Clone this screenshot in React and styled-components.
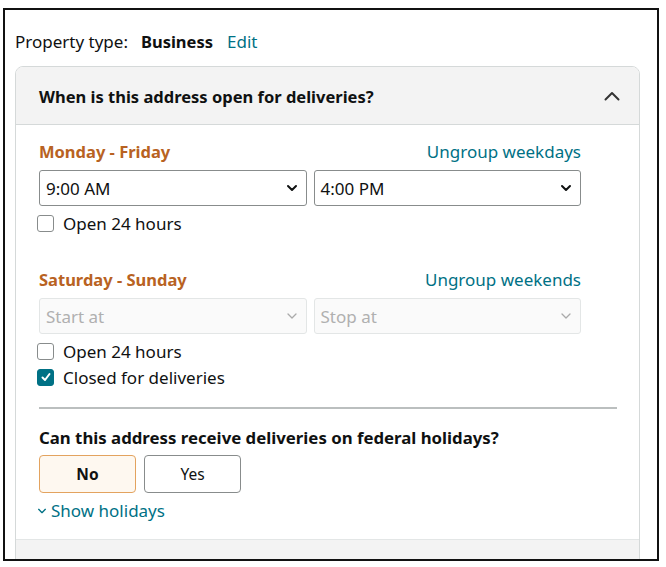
import React from "react";
import styled, { createGlobalStyle } from "styled-components";

const GlobalStyle = createGlobalStyle`
  html, body {
    margin: 0;
    padding: 0;
    background: #fff;
  }
  body {
    font-family: "Noto Sans", "Open Sans", Arial, sans-serif;
    color: #0f1111;
  }
`;

const ChevronDown = ({ size = 12, color = "#0f1111", weight = 2 }) => (
  <svg width={size} height={size} viewBox="0 0 12 12">
    <path d="M2 4 L6 8 L10 4" fill="none" stroke={color} strokeWidth={weight} strokeLinecap="round" strokeLinejoin="round" />
  </svg>
);

const ChevronUp = () => (
  <svg width="18" height="12" viewBox="0 0 18 12">
    <path d="M2.5 9.5 L9 3 L15.5 9.5" fill="none" stroke="#333" strokeWidth="2" strokeLinecap="round" strokeLinejoin="round" />
  </svg>
);

const Check = () => (
  <svg width="12" height="12" viewBox="0 0 12 12">
    <path d="M2.5 6.5 L5 9 L9.5 3" fill="none" stroke="#fff" strokeWidth="2" strokeLinecap="round" strokeLinejoin="round" />
  </svg>
);

const Select = ({ value, disabled }) => (
  <SelectBox disabled={disabled}>
    <span>{value}</span>
    <ChevronDown color={disabled ? "#aaa" : "#0f1111"} weight={disabled ? 1.3 : 2} />
  </SelectBox>
);

const CheckRow = ({ checked, children }) => (
  <CheckLine>
    <Box checked={checked}>{checked && <Check />}</Box>
    {children}
  </CheckLine>
);

const DayGroup = ({ title, link, start, stop, disabled, closed }) => (
  <Group>
    <GroupHead>
      <DayTitle>{title}</DayTitle>
      <TealLink>{link}</TealLink>
    </GroupHead>
    <SelectRow>
      <Select value={start} disabled={disabled} />
      <Select value={stop} disabled={disabled} />
    </SelectRow>
    <CheckRow>Open 24 hours</CheckRow>
    {closed && <CheckRow checked>Closed for deliveries</CheckRow>}
  </Group>
);

const App = () => {
  return (
    <>
      <GlobalStyle />
      <Frame>
        <PropertyRow>
          Property type: <strong>Business</strong> <EditLink>Edit</EditLink>
        </PropertyRow>
        <Panel>
          <PanelHead>
            <PanelTitle>When is this address open for deliveries?</PanelTitle>
            <ChevronUp />
          </PanelHead>
          <PanelBody>
            <DayGroup
              title="Monday - Friday"
              link="Ungroup weekdays"
              start="9:00 AM"
              stop="4:00 PM"
            />
            <DayGroup
              title="Saturday - Sunday"
              link="Ungroup weekends"
              start="Start at"
              stop="Stop at"
              disabled
              closed
            />
            <Divider />
            <Question>Can this address receive deliveries on federal holidays?</Question>
            <ButtonRow>
              <Choice selected>No</Choice>
              <Choice>Yes</Choice>
            </ButtonRow>
            <ShowLink>
              <ChevronDown size={10} color="#007185" weight={1.6} />
              Show holidays
            </ShowLink>
          </PanelBody>
          <PanelFoot />
        </Panel>
      </Frame>
    </>
  );
};

const Frame = styled.div`
  margin: 8px 0 0 3px;
  border: 2px solid #111;
  box-sizing: content-box;
  overflow: hidden;
  height: 549px;
  padding: 0 17px 0 10px;
  width: 625px;
`;

const PropertyRow = styled.div`
  font-size: 17px;
  height: 22px;
  margin-top: 20px;
  display: flex;
  align-items: center;
  gap: 10px;

  strong {
    font-weight: 700;
    font-size: 16.5px;
    margin-left: 3px;
  }
`;

const TealLink = styled.span`
  color: #007185;
  font-size: 17px;
`;

const EditLink = styled(TealLink)`
  margin-left: 4px;
`;

const Panel = styled.div`
  margin-top: 14px;
  border: 1px solid #d5d9d9;
  border-radius: 8px 8px 0 0;
  overflow: hidden;
`;

const PanelHead = styled.div`
  background: #f3f3f3;
  height: 57px;
  border-bottom: 1px solid #d5d9d9;
  display: flex;
  align-items: center;
  justify-content: space-between;
  padding: 0 18px 0 23px;
`;

const PanelTitle = styled.div`
  font-size: 16.5px;
  font-weight: 700;
  margin-top: 2px;
`;

const PanelBody = styled.div`
  padding: 15px 22px 17px 23px;
`;

const PanelFoot = styled.div`
  background: #f3f3f3;
  border-top: 1px solid #e3e6e6;
  height: 30px;
`;

const Group = styled.div`
  width: 542px;

  & + & {
    margin-top: 32px;
  }
`;

const GroupHead = styled.div`
  display: flex;
  justify-content: space-between;
  align-items: center;
  height: 22px;
  margin-bottom: 8px;
`;

const DayTitle = styled.div`
  color: #b86222;
  font-weight: 700;
  font-size: 16.5px;
`;

const SelectRow = styled.div`
  display: grid;
  grid-template-columns: 1fr 1fr;
  gap: 7px;
  margin-bottom: 4px;
`;

const SelectBox = styled.div`
  height: 36px;
  box-sizing: border-box;
  border: 1px solid ${(p) => (p.disabled ? "#e3e6e6" : "#888c8c")};
  background: ${(p) => (p.disabled ? "#fafafa" : "#fff")};
  color: ${(p) => (p.disabled ? "#b0b0b0" : "#0f1111")};
  border-radius: 3px;
  display: flex;
  align-items: center;
  justify-content: space-between;
  padding: 0 8px 0 6px;
  font-size: 17px;
`;

const CheckLine = styled.div`
  display: flex;
  align-items: center;
  gap: 9px;
  height: 26px;
  font-size: 17px;
  margin-left: -2px;
`;

const Box = styled.div`
  width: 17px;
  height: 17px;
  box-sizing: border-box;
  border-radius: 3px;
  border: 1px solid ${(p) => (p.checked ? "#007185" : "#888c8c")};
  background: ${(p) => (p.checked ? "#007185" : "#fff")};
  display: flex;
  align-items: center;
  justify-content: center;
`;

const Divider = styled.div`
  height: 2px;
  background: #bbbfbf;
  margin-top: 17px;
`;

const Question = styled.div`
  font-size: 16.8px;
  font-weight: 700;
  margin-top: 17px;
  height: 22px;
`;

const ButtonRow = styled.div`
  display: flex;
  gap: 8px;
  margin-top: 7px;
`;

const Choice = styled.div`
  width: 97px;
  height: 38px;
  box-sizing: border-box;
  border-radius: 4px;
  border: 1px solid ${(p) => (p.selected ? "#e3a35f" : "#888c8c")};
  background: ${(p) => (p.selected ? "#fef8f0" : "#fff")};
  font-weight: ${(p) => (p.selected ? 700 : 400)};
  font-size: 15.5px;
  display: flex;
  align-items: center;
  justify-content: center;
`;

const ShowLink = styled.div`
  color: #007185;
  font-size: 17px;
  display: flex;
  align-items: center;
  gap: 4px;
  margin-top: 6px;
  margin-left: -2px;
`;

export default App;
